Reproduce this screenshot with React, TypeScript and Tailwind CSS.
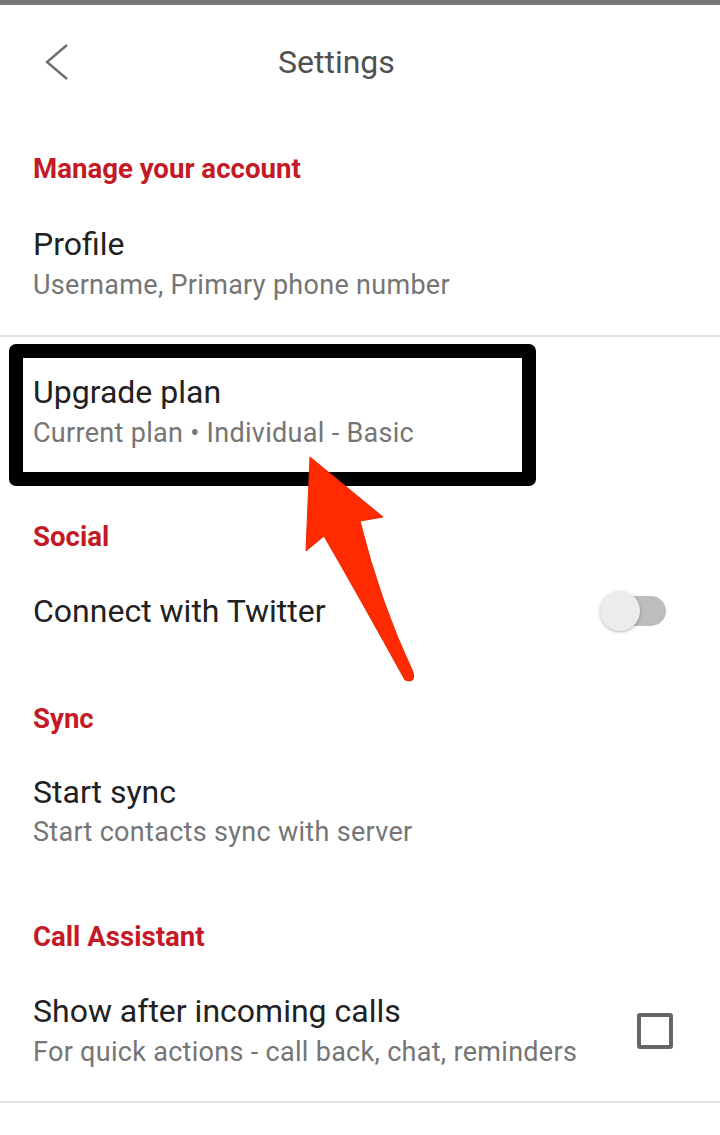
import React from "react";

// ---------- small pieces ----------

const SectionTitle = ({ children, className = "" }: { children: React.ReactNode; className?: string }) => (
  <p className={`px-[33px] text-[27.6px] leading-[32px] font-bold text-[#c41a26] ${className}`}>{children}</p>
);

const Title = ({ children }: { children: React.ReactNode }) => (
  <p className="text-[32px] leading-[36px] text-[#212121]">{children}</p>
);

const Sub = ({ children, className = "" }: { children: React.ReactNode; className?: string }) => (
  <p className={`text-[27px] leading-[32px] tracking-[0.3px] text-[#757575] ${className}`}>{children}</p>
);

const Toggle = () => (
  <div className="relative w-[66px] h-[40px] shrink-0">
    <div className="absolute right-0 top-[5px] h-[30px] w-[52px] rounded-full bg-[#bdbdbd]" />
    <div className="absolute left-0 top-0 h-[40px] w-[40px] rounded-full bg-[#ececec] shadow-[0_1px_3px_rgba(0,0,0,0.3)]" />
  </div>
);

const Checkbox = () => <div className="w-[36px] h-[36px] shrink-0 rounded-[3px] border-[4px] border-[#666]" />;

const Arrow = () => (
  <svg className="absolute left-0 top-0 pointer-events-none" width="720" height="1135" viewBox="0 0 720 1135">
    <path
      d="M310 457 L383 517 L360 521 Q380 602 413 672 Q416 684 405 680 Q362 602 324 536 L306 551 Z"
      fill="#ff2a00"
      stroke="#e92700"
      strokeWidth="1"
      strokeLinejoin="round"
    />
  </svg>
);

export default function App() {
  return (
    <div className="relative w-[720px] h-[1135px] bg-white overflow-hidden" style={{ fontFamily: "Roboto, 'Noto Sans', sans-serif" }}>
      {/* status strip */}
      <div className="h-[5px] bg-[#777]" />

      {/* header */}
      <div className="h-[114px] flex items-center">
        <svg className="ml-[44px]" width="26" height="38" viewBox="0 0 26 38">
          <polyline points="23,2 3,19 23,36" fill="none" stroke="#6e6e6e" strokeWidth="2.4" />
        </svg>
        <h1 className="ml-[208px] text-[32px] leading-[36px] text-[#505050]">Settings</h1>
      </div>

      {/* Manage your account */}
      <SectionTitle className="pt-[34px]">Manage your account</SectionTitle>
      <div className="px-[33px] pt-[41px] pb-[34px]">
        <Title>Profile</Title>
        <Sub className="mt-[7px]">Username, Primary phone number</Sub>
      </div>
      <div className="h-[2px] bg-[#e3e3e3]" />

      {/* Upgrade plan, boxed */}
      <div className="relative px-[33px] pt-[37px]">
        <div className="absolute left-[9px] top-[7px] w-[527px] h-[142px] rounded-[7px] border-[14px] border-black" />
        <Title>Upgrade plan</Title>
        <Sub className="mt-[7px]">Current plan • Individual - Basic</Sub>
      </div>

      {/* Social */}
      <SectionTitle className="pt-[72px]">Social</SectionTitle>
      <div className="flex items-center justify-between pl-[33px] pr-[54px] pt-[38px]">
        <Title>Connect with Twitter</Title>
        <Toggle />
      </div>

      {/* Sync */}
      <SectionTitle className="pt-[72px]">Sync</SectionTitle>
      <div className="px-[33px] pt-[39px]">
        <Title>Start sync</Title>
        <Sub className="mt-[6px]">Start contacts sync with server</Sub>
      </div>

      {/* Call Assistant */}
      <SectionTitle className="pt-[73px]">Call Assistant</SectionTitle>
      <div className="flex items-center justify-between pl-[33px] pr-[47px] pt-[40px] pb-[33px]">
        <div>
          <Title>Show after incoming calls</Title>
          <Sub className="mt-[7px]">For quick actions - call back, chat, reminders</Sub>
        </div>
        <Checkbox />
      </div>
      <div className="h-[2px] bg-[#e3e3e3]" />

      <Arrow />
    </div>
  );
}
